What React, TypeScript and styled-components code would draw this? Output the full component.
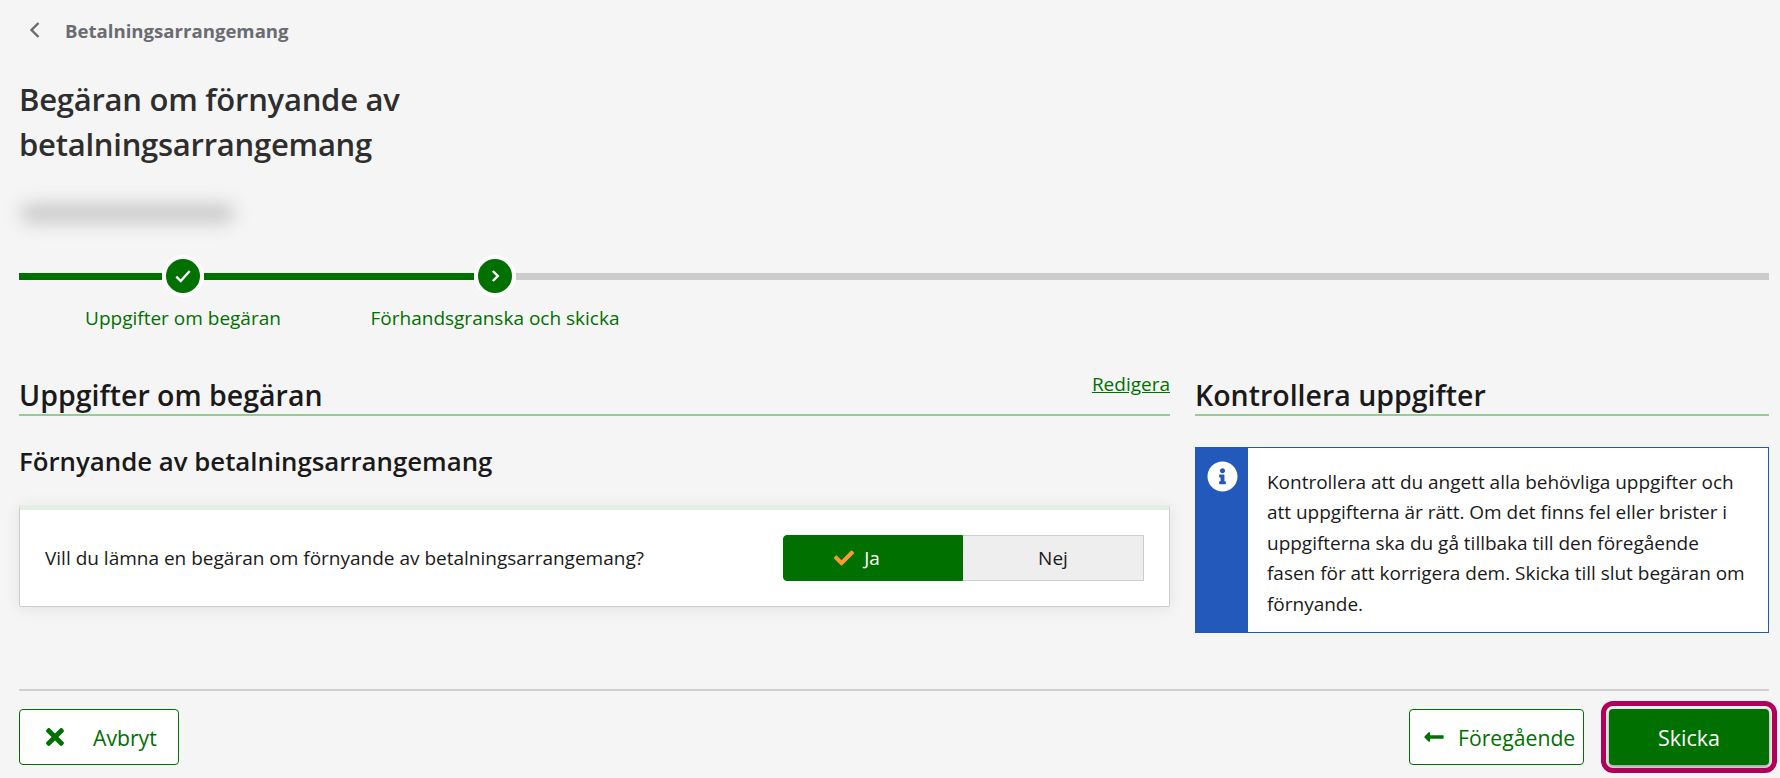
import React from 'react';
import styled, {createGlobalStyle} from 'styled-components';
import {FaCheck, FaInfoCircle, FaLongArrowAltLeft, FaTimes} from 'react-icons/fa';

const green = '#007000';

const GlobalStyle = createGlobalStyle`
  html, body {
    margin: 0;
    padding: 0;
    background: #f5f5f5;
  }
  body {
    font-family: "Open Sans", "Noto Sans", "Liberation Sans", sans-serif;
    color: #1a1a1a;
    overflow: hidden;
  }
`;

const Page = styled.div`
  width: 1780px;
  height: 778px;
  box-sizing: border-box;
  padding: 0 11px 0 19px;
  overflow: hidden;
`;

const Breadcrumb = styled.div`
  display: flex;
  align-items: center;
  height: 24px;
  padding: 18px 0 1px 8px;
  color: #6b6b72;
  font-size: 18.6px;
  font-weight: 700;
`;

const BackIcon = styled.svg`
  width: 16px;
  height: 22px;
  margin-right: 22px;
  fill: none;
  stroke: #6b6b72;
  stroke-width: 2.4;
`;

const Title = styled.h1`
  margin: 34px 0 0;
  width: 420px;
  color: #2e2e2e;
  font-size: 31px;
  font-weight: 600;
  line-height: 45px;
  letter-spacing: -0.25px;
`;

const BlurredName = styled.div`
  width: 213px;
  height: 17px;
  margin: 38px 0 0 2px;
  background: #c4c4c4;
  border-radius: 8px;
  filter: blur(9px);
`;

const Track = styled.div`
  display: flex;
  align-items: center;
  height: 42px;
  margin-top: 33px;
`;

const Segment = styled.div<{$width?: number; $done?: boolean}>`
  height: 7px;
  flex: ${({$width}) => ($width ? `0 0 ${$width}px` : '1')};
  background: ${({$done}) => ($done ? green : '#cccccc')};
`;

const Ring = styled.div`
  flex: 0 0 34px;
  height: 34px;
  display: flex;
  align-items: center;
  justify-content: center;
  background: ${green};
  border: 4px solid #fff;
  border-radius: 50%;
`;

const StepIcon = styled.svg`
  width: 20px;
  height: 20px;
  fill: none;
  stroke: #fff;
  stroke-width: 2.2;
`;

const StepLabels = styled.div`
  display: grid;
  grid-template-columns: 328px 296px;
  margin-top: 8px;
`;

const StepLabel = styled.div`
  text-align: center;
  color: ${green};
  font-size: 19px;
  line-height: 26px;
  white-space: nowrap;
`;

const Columns = styled.div`
  display: grid;
  grid-template-columns: 1151px 574px;
  column-gap: 25px;
  margin-top: 37px;
`;

const SectionHead = styled.div`
  display: flex;
  justify-content: space-between;
  height: 48px;
  border-bottom: 2px solid #99c999;
  box-sizing: border-box;
`;

const SectionTitle = styled.h2`
  margin: 0;
  padding-top: 8px;
  color: #1a1a1a;
  font-size: 28.5px;
  font-weight: 600;
  line-height: 38px;
`;

const EditLink = styled.a`
  padding-top: 3px;
  color: ${green};
  font-size: 19px;
  line-height: 26px;
  text-decoration: underline;
`;

const SubTitle = styled.h3`
  margin: 28px 0 0;
  color: #1a1a1a;
  font-size: 25.8px;
  font-weight: 600;
  line-height: 35px;
`;

const Card = styled.div`
  display: flex;
  align-items: center;
  justify-content: space-between;
  height: 102px;
  margin-top: 26px;
  box-sizing: border-box;
  padding: 0 25px;
  background: #fff;
  border: 1px solid #cccccc;
  border-top: 5px solid #e4efe4;
  border-radius: 0 0 2px 2px;
  box-shadow: 0 2px 16px rgba(0, 0, 0, 0.08);
`;

const Question = styled.div`
  font-size: 19px;
`;

const Toggle = styled.div`
  display: grid;
  grid-template-columns: 180px 181px;
  height: 46px;
`;

const ToggleOption = styled.div<{$active?: boolean}>`
  display: flex;
  align-items: center;
  justify-content: center;
  gap: 10px;
  box-sizing: border-box;
  padding-right: ${({$active}) => ($active ? '32px' : '0')};
  font-size: 19px;
  background: ${({$active}) => ($active ? green : '#eeeeee')};
  color: ${({$active}) => ($active ? '#fff' : '#1a1a1a')};
  border: 1px solid ${({$active}) => ($active ? green : '#cccccc')};
  border-left-width: ${({$active}) => ($active ? '1px' : '0')};
  border-radius: ${({$active}) => ($active ? '4px 0 0 4px' : '0')};

  svg {
    color: #f89a34;
    font-size: 20px;
  }
`;

const InfoBox = styled.div`
  display: flex;
  height: 186px;
  margin-top: 31px;
  box-sizing: border-box;
  background: #fff;
  border: 1px solid #2259bb;
`;

const InfoSide = styled.div`
  flex: 0 0 52px;
  display: flex;
  justify-content: center;
  padding-top: 13px;
  background: #2259bb;
  color: #fff;
  font-size: 31px;
`;

const InfoText = styled.p`
  margin: 0;
  padding: 19px 20px 0 19px;
  font-size: 19px;
  line-height: 30.4px;
  letter-spacing: -0.02px;
`;

const Footer = styled.div`
  display: flex;
  justify-content: space-between;
  align-items: center;
  margin-top: 56px;
  padding-top: 18px;
  border-top: 2px solid #d0d0d0;
`;

const FooterRight = styled.div`
  display: flex;
  gap: 25px;
`;

const OutlineButton = styled.button<{$width: number; $gap: number; $inset: number; $icon: number}>`
  display: flex;
  align-items: center;
  width: ${({$width}) => $width}px;
  height: 56px;
  box-sizing: border-box;
  padding: 0 0 0 ${({$inset}) => $inset}px;
  gap: ${({$gap}) => $gap}px;
  background: #fff;
  color: ${green};
  border: 1px solid ${green};
  border-radius: 4px;
  font-family: inherit;
  font-size: 21.2px;

  svg {
    font-size: ${({$icon}) => $icon}px;
    flex: none;
  }
`;

const SendButton = styled.button`
  position: relative;
  width: 160px;
  height: 56px;
  background: ${green};
  color: #fff;
  border: 0;
  border-radius: 4px;
  font-family: inherit;
  font-size: 21.5px;
  box-shadow: 0 2px 4px rgba(0, 0, 0, 0.4);
  outline: 5px solid #b0005a;
  outline-offset: 3px;
`;

export default function App() {
  return (
    <Page>
      <GlobalStyle />
      <Breadcrumb>
        <BackIcon viewBox="0 0 16 22">
          <path d="M11.5 4 L4.5 11 L11.5 18" />
        </BackIcon>
        Betalningsarrangemang
      </Breadcrumb>
      <Title>Begäran om förnyande av betalningsarrangemang</Title>
      <BlurredName />
      <Track>
        <Segment $width={143} $done />
        <Ring>
          <StepIcon viewBox="0 0 18 18">
            <path d="M3 9.5 L7 13.5 L15 4.5" />
          </StepIcon>
        </Ring>
        <Segment $width={270} $done />
        <Ring>
          <StepIcon viewBox="0 0 18 18">
            <path d="M7 4.5 L11.5 9 L7 13.5" />
          </StepIcon>
        </Ring>
        <Segment />
      </Track>
      <StepLabels>
        <StepLabel>Uppgifter om begäran</StepLabel>
        <StepLabel>Förhandsgranska och skicka</StepLabel>
      </StepLabels>
      <Columns>
        <section>
          <SectionHead>
            <SectionTitle>Uppgifter om begäran</SectionTitle>
            <EditLink>Redigera</EditLink>
          </SectionHead>
          <SubTitle>Förnyande av betalningsarrangemang</SubTitle>
          <Card>
            <Question>Vill du lämna en begäran om förnyande av betalningsarrangemang?</Question>
            <Toggle>
              <ToggleOption $active>
                <FaCheck />
                Ja
              </ToggleOption>
              <ToggleOption>Nej</ToggleOption>
            </Toggle>
          </Card>
        </section>
        <section>
          <SectionHead>
            <SectionTitle>Kontrollera uppgifter</SectionTitle>
          </SectionHead>
          <InfoBox>
            <InfoSide>
              <FaInfoCircle />
            </InfoSide>
            <InfoText>
              Kontrollera att du angett alla behövliga uppgifter och att uppgifterna är rätt. Om det finns fel eller
              brister i uppgifterna ska du gå tillbaka till den föregående fasen för att korrigera dem. Skicka till
              slut begäran om förnyande.
            </InfoText>
          </InfoBox>
        </section>
      </Columns>
      <Footer>
        <OutlineButton $width={160} $gap={25} $inset={22} $icon={26}>
          <FaTimes />
          Avbryt
        </OutlineButton>
        <FooterRight>
          <OutlineButton $width={175} $gap={13} $inset={13} $icon={22}>
            <FaLongArrowAltLeft />
            Föregående
          </OutlineButton>
          <SendButton>Skicka</SendButton>
        </FooterRight>
      </Footer>
    </Page>
  );
}
